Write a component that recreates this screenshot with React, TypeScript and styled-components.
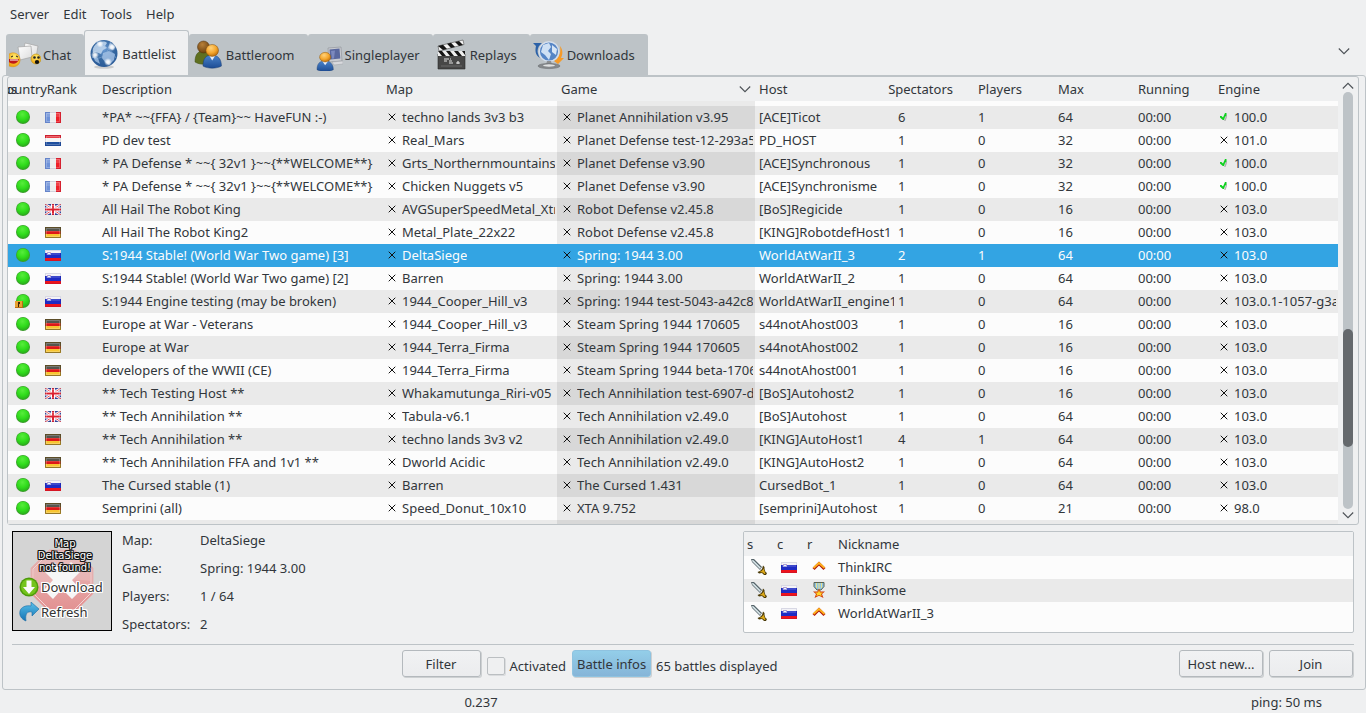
import React from "react";
import styled, { createGlobalStyle, css } from "styled-components";

const c = {
  window: "#eff0f1",
  line: "#bdc3c7",
  text: "#31363b",
  base: "#fcfcfc",
  alt: "#eaeaea",
  sorted: "#eaeaea",
  sortedAlt: "#d8d8d8",
  select: "#33a4e3",
};

const Global = createGlobalStyle`
  * { box-sizing: border-box; }
  body {
    margin: 0;
    background: ${c.window};
    color: ${c.text};
    font: 13px/20px "Noto Sans", sans-serif;
  }
  svg { display: block; flex: none; }
`;

/* ---------- layout ---------- */

const Window = styled.div`
  display: flex;
  flex-direction: column;
  height: 100vh;
  min-height: 480px;
  overflow: hidden;
`;

const MenuBar = styled.nav`
  display: flex;
  align-items: flex-start;
  height: 30px;
  flex: none;
  padding: 4px 10px;
  gap: 14px;
`;

const MenuItem = styled.button`
  border: 0;
  padding: 0;
  background: none;
  color: inherit;
  font: inherit;
`;

const TabBar = styled.div`
  display: flex;
  align-items: flex-end;
  flex: none;
  height: 46px;
  padding-left: 6px;
  margin-bottom: -1px;
`;

const Tab = styled.button<{ $active?: boolean }>`
  display: flex;
  align-items: center;
  gap: 2px;
  height: 42px;
  border: 0;
  border-radius: 3px 3px 0 0;
  padding: 0 13px 0 3px;
  background: ${c.line};
  color: inherit;
  font: inherit;
  ${(p) =>
    p.$active &&
    css`
      height: 46px;
      border: 1px solid ${c.line};
      border-width: 1px 1px 0;
      padding: 0 12px 0 3px;
      background: ${c.window};
    `}
`;

const TabMenu = styled.button`
  margin: 0 16px 21px auto;
  border: 0;
  padding: 0;
  background: none;
`;

const Panel = styled.main`
  display: flex;
  flex-direction: column;
  flex: 1;
  min-height: 0;
  margin-left: 2px;
  border: 1px solid ${c.line};
  border-radius: 3px;
`;

const ListFrame = styled.section`
  display: flex;
  flex: 1;
  min-height: 0;
  margin: 0 6px 0 4px;
  border: 1px solid ${c.line};
  border-radius: 3px;
`;

/* ---------- battle table ---------- */

const BattleTable = styled.table`
  display: flex;
  flex-direction: column;
  flex: 1;
  min-width: 0;
  overflow: hidden;
`;

const Row = styled.tr<{ $selected?: boolean }>`
  display: grid;
  grid-template-columns: 30px 30px 30px minmax(0, 1fr) 175px 198px 139px 80px 80px 80px 80px 124px;
  flex: none;
`;

const Head = styled.thead`
  display: block;
`;

const HeadCell = styled.th<{ $end?: boolean }>`
  display: flex;
  align-items: center;
  justify-content: ${(p) => (p.$end ? "flex-end" : "space-between")};
  height: 24px;
  padding: 0 ${(p) => (p.$end ? 21 : 4)}px 0 4px;
  font-weight: 400;
  white-space: nowrap;
`;

const Body = styled.tbody`
  display: flex;
  flex-direction: column;
  flex: 1;
  min-height: 0;
  overflow: hidden;
`;

const BattleRow = styled(Row)`
  background: ${c.base};
  &:nth-child(even) {
    background: ${c.alt};
  }
  &:first-child {
    margin-top: -18px;
  }
  ${(p) =>
    p.$selected &&
    css`
      &&:nth-child(n) {
        background: ${c.select};
        color: ${c.base};
      }
    `}
`;

const Cell = styled.td<{ $pad?: number }>`
  display: flex;
  align-items: center;
  height: 23px;
  padding: 0 1px 1px ${(p) => p.$pad ?? 4}px;
  white-space: nowrap;
  overflow: hidden;
`;

const SortedCell = styled(Cell)`
  ${BattleRow}:nth-child(odd) > & {
    background: ${c.sorted};
  }
  ${BattleRow}:nth-child(even) > & {
    background: ${c.sortedAlt};
  }
  ${BattleRow}[aria-selected="true"] > && {
    background: ${c.select};
  }
`;

const Marked = styled.span`
  display: flex;
  align-items: center;
  gap: 6px;
  width: 100%;
  padding-right: 1px;
  overflow: hidden;
`;

const Clip = styled.span`
  overflow: hidden;
`;

const Scroll = styled.div`
  display: flex;
  flex-direction: column;
  align-items: center;
  flex: none;
  width: 20px;
  padding: 5px 0 5px;
  gap: 2px;
`;

const Track = styled.div`
  display: flex;
  flex-direction: column;
  flex: 1;
  width: 10px;
  border-radius: 5px;
  background: ${c.line};
`;

const TrackGap = styled.div<{ $grow: number }>`
  flex: ${(p) => p.$grow};
`;

const Thumb = styled.div`
  flex: 118;
  border-radius: 5px;
  background: #65696d;
`;

/* ---------- details ---------- */

const Details = styled.section`
  display: flex;
  flex: none;
  margin: 6px 11px 0 9px;
`;

const MapPreview = styled.div`
  display: grid;
  width: 100px;
  height: 100px;
  border: 1px solid #000;
  background: #d4d4d4;
  > * {
    grid-area: 1 / 1;
  }
`;

const PreviewText = styled.div`
  display: flex;
  flex-direction: column;
  padding: 6px 0 0 6px;
`;

const Missing = styled.p`
  margin: 0;
  color: #fff;
  font: 10px/12px "DejaVu Sans", sans-serif;
  text-align: center;
  text-shadow: 1px 0 #111, -1px 0 #111, 0 1px #111, 0 -1px #111, 1px 1px #111, -1px -1px #111,
    1px -1px #111, -1px 1px #111;
`;

const PreviewAction = styled.button`
  display: flex;
  align-items: center;
  gap: 2px;
  height: 25px;
  border: 0;
  padding: 0;
  background: none;
  color: #333;
  font: 13px/20px "Noto Sans", sans-serif;
  text-shadow: 1px 0 #fff, -1px 0 #fff, 0 1px #fff, 0 -1px #fff, 1px 1px #fff, -1px -1px #fff,
    1px -1px #fff, -1px 1px #fff;
`;

const Facts = styled.dl`
  display: grid;
  grid-template-columns: 78px auto;
  grid-auto-rows: 18px;
  gap: 10px 0;
  margin: 0 auto 0 10px;
  line-height: 18px;
  dd {
    margin: 0;
  }
`;

const Users = styled.div`
  flex: 0 0 611px;
  height: 102px;
  border: 1px solid ${c.line};
  border-radius: 2px;
  background: ${c.base};
  overflow: hidden;
`;

const UserTable = styled.table`
  display: block;
  thead,
  tbody {
    display: block;
  }
  thead {
    background: ${c.window};
  }
`;

const UserRow = styled.tr`
  display: grid;
  grid-template-columns: 30px 30px 30px 1fr;
  tbody &:nth-child(even) {
    background: ${c.alt};
  }
`;

const UserHead = styled(HeadCell)`
  padding-left: 3px;
  &:last-child {
    padding-left: 4px;
  }
`;

/* ---------- bottom ---------- */

const Rule = styled.hr`
  flex: none;
  width: auto;
  height: 1px;
  margin: 11px 11px 5px 9px;
  border: 0;
  background: ${c.line};
`;

const Actions = styled.div`
  display: flex;
  flex: none;
  align-items: flex-start;
  gap: 6px;
  margin: 0 12px 8px 9px;
`;

const Spacer = styled.span<{ $grow: number }>`
  flex: ${(p) => p.$grow};
`;

const Button = styled.button<{ $on?: boolean; $w: number }>`
  width: ${(p) => p.$w}px;
  height: 27px;
  border: 1px solid ${(p) => (p.$on ? "#8fc3e0" : "#b4b9bd")};
  border-radius: 3px;
  padding: 0;
  background: ${(p) => (p.$on ? "linear-gradient(#93cee9, #86b5d8)" : "linear-gradient(#f1f2f3, #ebecee)")};
  box-shadow: 1px 1px 0 #cdd0d2;
  color: inherit;
  font: inherit;
`;

const CheckLabel = styled.label`
  display: flex;
  align-items: center;
  gap: 5px;
  height: 31px;
`;

const CheckBox = styled.input`
  appearance: none;
  width: 18px;
  height: 18px;
  margin: 0;
  border: 1px solid #bbbfc2;
  border-radius: 2px;
  box-shadow: 1px 1px 0 #dadcde;
`;

const Count = styled.output`
  margin-left: -1px;
  padding-top: 6px;
`;

const StatusBar = styled.footer`
  display: flex;
  flex: none;
  height: 23px;
  padding-top: 2px;
`;

const StatusField = styled.span<{ $basis: string }>`
  flex: ${(p) => p.$basis};
`;

/* ---------- icons ---------- */

const Chevron = ({ up }: { up?: boolean }) => (
  <svg width="12" height="8" viewBox="0 0 12 8" fill="none" stroke="#4d5257" strokeWidth="1.1">
    <path d={up ? "M.8 6.5 6 1.3l5.200 5.200" : "M.8 1.500 6 6.700l5.200-5.200"} />
  </svg>
);

const Cross = () => (
  <svg width="8" height="8" viewBox="0 0 8 8" shapeRendering="crispEdges">
    <path
      fill="#111"
      d="M1 1h1v1H1zM2 2h1v1H2zM3 3h2v2H3zM5 2h1v1H5zM6 1h1v1H6zM2 5h1v1H2zM1 6h1v1H1zM5 5h1v1H5zM6 6h1v1H6z"
    />
    <path fill="#000" opacity=".25" d="M0 0h1v1H0zM7 0h1v1H7zM0 7h1v1H0zM7 7h1v1H7z" />
  </svg>
);

const Tick = () => (
  <svg width="8" height="8" viewBox="0 0 8 8">
    <path fill="#8a8a8a" opacity=".6" d="M7 1v3L5.500 8H4.200L5.500 4z" />
    <path fill="#10d020" d="M5 0h1.500v2.500L5 4 4 7H2.800L0 4.500V3h1.500L3 4.500z" />
  </svg>
);

const Orb = ({ locked }: { locked?: boolean }) => (
  <svg width="16" height="16" viewBox="0 0 16 16">
    <circle cx="8" cy="8" r="7" fill="#3f9a30" />
    <circle cx="8" cy="7.800" r="6.400" fill="url(#orb)" />
    {locked && (
      <g>
        <path d="M0 8h8v7H0z" fill="#e8a030" />
        <path d="M0 14h8v1H0zM7 8h1v7H7z" fill="#b86a14" />
        <path d="M3 9h2v2H4v3H3z" fill="#3a2208" />
      </g>
    )}
  </svg>
);

type Country = "fr" | "nl" | "gb" | "de" | "si";

const bands: Record<string, { colours: [string, string, string]; cuts: [number, number] }> = {
  nl: { colours: ["#e3202a", "#f4f4f4", "#1f4f9e"], cuts: [3, 7] },
  de: { colours: ["#3a3a32", "#dd1818", "#f7c531"], cuts: [4, 7] },
  si: { colours: ["#f2f2f6", "#1e2bc4", "#ee141c"], cuts: [3, 8] },
};

const Flag = ({ of }: { of: Country }) => {
  const b = bands[of];
  return (
    <svg width="16" height="11" viewBox="0 0 16 11">
      {of === "fr" && (
        <>
          <path d="M0 0h5v11H0z" fill="#6f92d8" />
          <path d="M5 0h6v11H5z" fill="#ececec" />
          <path d="M11 0h5v11h-5z" fill="#ee2028" />
        </>
      )}
      {of === "gb" && (
        <>
          <path d="M0 0h16v11H0z" fill="#35479e" />
          <path d="m0 0 16 11M16 0 0 11" stroke="#fff" strokeWidth="2.600" />
          <path d="m0 0 16 11M16 0 0 11" stroke="#e0404a" strokeWidth="1" />
          <path d="M8 0v11M0 5.500h16" stroke="#fff" strokeWidth="4" />
          <path d="M8 0v11M0 5.500h16" stroke="#dc2030" strokeWidth="2" />
        </>
      )}
      {b && (
        <>
          <path d="M0 0h16v11H0z" fill={b.colours[1]} />
          <path d={`M0 0h16v${b.cuts[0]}H0z`} fill={b.colours[0]} />
          <path d={`M0 ${b.cuts[1]}h16v${11 - b.cuts[1]}H0z`} fill={b.colours[2]} />
        </>
      )}
      {of === "si" && (
        <>
          <path d="M2 2h4v3H2z" fill="#8d92dc" />
          <path d="M3 3h2v1H3z" fill="#f4f4fa" />
          <path d="M2 2h1v1H2zM5 2h1v1H5z" fill="#c890b4" />
        </>
      )}
      <path d="M1 1h14v4H1z" fill="#fff" opacity=".14" />
      {of !== "si" && <path d="M1.500 1.500h13v8h-13z" fill="none" stroke="#fff" opacity=".22" />}
      <path
        d="M.5.5h15v10H.5z"
        fill="none"
        stroke={of === "de" ? "#6b5524" : "#202060"}
        opacity={of === "de" ? 0.7 : 0.12}
      />
    </svg>
  );
};

const Defs = () => (
  <svg width="0" height="0" style={{ position: "absolute" }} aria-hidden="true">
    <defs>
      <radialGradient id="orb" cx=".45" cy=".3" r=".75">
        <stop offset="0" stopColor="#58ec3c" />
        <stop offset=".55" stopColor="#30dc1c" />
        <stop offset="1" stopColor="#28a81a" />
      </radialGradient>
      <radialGradient id="skin" cx=".4" cy=".3" r=".7">
        <stop offset="0" stopColor="#ffd27a" />
        <stop offset=".6" stopColor="#f5a62c" />
        <stop offset="1" stopColor="#c0700c" />
      </radialGradient>
      <radialGradient id="brown" cx=".4" cy=".3" r=".7">
        <stop offset="0" stopColor="#b88038" />
        <stop offset="1" stopColor="#6e4310" />
      </radialGradient>
      <linearGradient id="suit" x2="0" y2="1">
        <stop offset="0" stopColor="#4a84cc" />
        <stop offset="1" stopColor="#1d4c94" />
      </linearGradient>
      <radialGradient id="globe" cx=".5" cy=".35" r=".65">
        <stop offset="0" stopColor="#6c9cd4" />
        <stop offset=".6" stopColor="#34669f" />
        <stop offset="1" stopColor="#2a5a98" />
      </radialGradient>
      <radialGradient id="glow">
        <stop offset="0" stopColor="#fff" />
        <stop offset=".4" stopColor="#fff" stopOpacity=".8" />
        <stop offset="1" stopColor="#fff" stopOpacity="0" />
      </radialGradient>
      <radialGradient id="smile" cx=".5" cy=".3" r=".7">
        <stop offset="0" stopColor="#ffec70" />
        <stop offset="1" stopColor="#f0a410" />
      </radialGradient>
      <linearGradient id="paper" x2="1" y2="1">
        <stop offset="0" stopColor="#fff" />
        <stop offset="1" stopColor="#dcdcdc" />
      </linearGradient>
      <linearGradient id="arrow" x2="0" y2="1">
        <stop offset="0" stopColor="#58c0ea" />
        <stop offset="1" stopColor="#1674b4" />
      </linearGradient>
      <linearGradient id="stop" x2="0" y2="1">
        <stop offset="0" stopColor="#e0b4b4" />
        <stop offset=".5" stopColor="#e6a6a6" />
        <stop offset="1" stopColor="#e29090" />
      </linearGradient>
    </defs>
  </svg>
);

const ChatIcon = () => (
  <svg width="32" height="32" viewBox="0 0 32 32">
    <path d="m16 4 13 3-2 12-13-3z" fill="url(#paper)" stroke="#a4a4a4" strokeWidth=".7" />
    <path d="m9 8 13-1 1 11-12 3z" fill="url(#paper)" stroke="#a4a4a4" strokeWidth=".7" />
    <path d="M0 15c5-3 11 0 11 6 0 6-6 8-11 6z" fill="url(#smile)" stroke="#d88a10" strokeWidth=".5" />
    <path d="M0 20h10c-1 5-7 6-10 3z" fill="#c01818" />
    <path d="M1 21h8" stroke="#fff" strokeWidth="1" />
    <path d="m2 18 2-1M7 17l2 1" stroke="#222" strokeWidth="1" />
    <circle cx="27" cy="20" r="5" fill="url(#smile)" stroke="#b89010" strokeWidth=".6" />
    <ellipse cx="28" cy="23" rx="2.200" ry="2" fill="#111" />
    <circle cx="25.500" cy="18.500" r="1.300" fill="#222" />
    <circle cx="29.500" cy="18.500" r="1.300" fill="#222" />
  </svg>
);

const BattlelistIcon = () => (
  <svg width="32" height="32" viewBox="0 0 32 32">
    <ellipse cx="16" cy="29" rx="10" ry="1.800" fill="#000" opacity=".15" />
    <circle cx="16" cy="15.500" r="13.500" fill="url(#globe)" />
    <path d="M8 6c4-3 9-3 11-1l-2 3 2 2-4 2-2 4-5-2-3 1c-1-3 0-6 3-9z" fill="#c3d8ef" opacity=".85" />
    <path d="m15 15 6-2 6 3-1 6-5 5-4-3-3-4z" fill="#a9c6e8" opacity=".8" />
    <path d="m22 4 5 5-2 3-5-2zM5 18l5 2 2 6-5-3z" fill="#a9c7e8" opacity=".75" />
    <path d="M4 19c6 3 14 1 18-12M8 4c8 2 16 9 20 16" stroke="#8fb3dc" strokeWidth=".8" fill="none" opacity=".7" />
    <g fill="url(#glow)">
      <circle cx="12" cy="6" r="3.500" />
      <circle cx="24" cy="9" r="4" />
      <circle cx="7" cy="17" r="4" />
      <circle cx="20" cy="24" r="4" />
    </g>
  </svg>
);

const Person = ({ head, suit }: { head: string; suit: string }) => (
  <>
    <path d="M0 24c0-8 3-12 9-12s10 4 10 12c-5 3-14 3-19 0z" fill={suit} stroke="#173a70" strokeWidth=".5" />
    <path d="m6 12 3.500 6L13 12z" fill="#e8eef8" />
    <circle cx="9.500" cy="7" r="6.500" fill={head} stroke="#7a4808" strokeWidth=".5" />
  </>
);

const BattleroomIcon = () => (
  <svg width="32" height="32" viewBox="0 0 32 32">
    <path d="M3 23c0-8 3-11 9-11s8 4 8 11c-5 3-12 3-17 0z" fill="#5f7020" stroke="#3c4a10" strokeWidth=".5" />
    <circle cx="11.500" cy="8" r="6" fill="url(#brown)" stroke="#4c2c06" strokeWidth=".5" />
    <g transform="translate(11 5) scale(.97 .92)">
      <Person head="url(#skin)" suit="url(#suit)" />
    </g>
  </svg>
);

const SingleplayerIcon = () => (
  <svg width="32" height="32" viewBox="0 0 32 32">
    <path d="m17 9 13-1 1 14-13 1z" fill="#c9cbd0" stroke="#8b8e95" strokeWidth=".6" />
    <path d="m18.500 10.500 10-1 .8 10-10 1z" fill="#5a689e" />
    <path d="m20 12 4-.5-1 8-2 .2z" fill="#8a97cc" opacity=".7" />
    <path d="m21 23 11-1v3l-9 1z" fill="#d9dade" stroke="#a0a3a9" strokeWidth=".5" />
    <g transform="translate(6 13) scale(.86 .74)">
      <Person head="url(#skin)" suit="url(#suit)" />
    </g>
  </svg>
);

const ReplaysIcon = () => (
  <svg width="32" height="32" viewBox="0 0 32 32">
    <path d="M2 15h27v15H2z" fill="#474747" stroke="#2a2a2a" strokeWidth=".6" />
    <path d="M2 12h27v5H2z" fill="#eee" />
    <path d="m2 12 4 5h4l-4-5zM10 12l4 5h4l-4-5zM18 12l4 5h4l-4-5zM26 12l3 4v-4z" fill="#151515" />
    <path d="m2 7 25-6 1 4.500L3 12z" fill="#f2f2f2" stroke="#333" strokeWidth=".5" />
    <path d="m2 7 5 4 4-1-4-4.200zM11 4.800l4 4.200 4-1-4-4.200zM19 2.900l4 4.100 4-1-4-4.100z" fill="#151515" />
    <path d="M8 20h5M14 20h1M8 22h3M13 22h3M13 24h4M20 24h4M22 22v3" stroke="#e4e4e4" strokeWidth="1.200" />
    <path d="M5 27h21" stroke="#6a6a6a" />
  </svg>
);

const DownloadsIcon = () => (
  <svg width="32" height="32" viewBox="0 0 32 32">
    <path d="M0 4h9l-3 3c-2 4-2 7 1 12C2 16 2 11 3 7z" fill="#2c62a8" />
    <path d="M27 7c3 4 3 8 1 12h3l-6 6-4-3 3-2c3-4 4-8 3-13z" fill="#f59a28" />
    <circle cx="16" cy="12.500" r="9.800" fill="#5585c6" stroke="#d5deea" strokeWidth="1.500" />
    <path d="m10 6 6-2 2 4-3 4 3 3-2 6-4-5-4-3z" fill="#dceaf8" opacity=".9" />
    <path d="m19 6 5 4-1 6-4-3z" fill="#e6f0fa" opacity=".9" />
    <path d="M14 22h4l1 4h-6z" fill="#8c8f92" />
    <ellipse cx="16" cy="27" rx="11" ry="2.600" fill="#85888b" stroke="#6d7073" strokeWidth=".6" />
    <ellipse cx="16" cy="26.500" rx="6" ry="1.200" fill="#dfe1e2" />
  </svg>
);

const StopIcon = () => (
  <svg width="98" height="98" viewBox="0 0 98 98">
    <path d="M36 18h26l18 18v26L62 80H36L18 62V36z" fill="url(#stop)" stroke="#e4b4b4" />
    <path d="M37 20h24l17 17v24L61 78H37L20 61V37z" fill="none" stroke="#f2d4d4" />
    <path d="M37 21h24l16 16v12c-18-3-38-1-56 8V37z" fill="#fff" opacity=".14" />
    <path d="m41 30 8 9 9-9 10 9-9 9 9 10-9 9-10-10-9 10-9-9 9-10-9-9z" fill="#f6f6f6" />
  </svg>
);

const DownloadIcon = () => (
  <svg width="20" height="20" viewBox="0 0 20 20">
    <circle cx="10" cy="10" r="9.500" fill="#4c9a0a" />
    <circle cx="10" cy="10" r="8" fill="#74c41c" />
    <path d="M7.500 3.500h5V10H16l-6 7-6-7h3.500z" fill="#fafafa" />
  </svg>
);

const RefreshIcon = () => (
  <svg width="20" height="20" viewBox="0 0 20 20">
    <path
      d="M12 0 20 7l-7 7v-4c-5-1-7 2-6 9C2 17 0 13 1 9c1-4 6-6 11-5z"
      fill="url(#arrow)"
      stroke="#1a6ca4"
      strokeWidth=".6"
    />
  </svg>
);

const Sword = () => (
  <svg width="16" height="16" viewBox="0 0 16 16">
    <path d="M0 0h3l8 8-2 3-8-8z" fill="#56646a" />
    <path d="m1 1 1.500.2 7.500 7.500-1 1.200L1.500 2.500z" fill="#d9e6ea" />
    <path d="M12 6.500 13.500 8v2l1 3 1.500 1-1 2h-2l-2-2-3 .5L6.500 13 9 12l2-2z" fill="#4a3a08" />
    <path d="m12 8 .5 2-2 2-2 1 3 .5 2 1.500h1l-1-3z" fill="#dca818" />
  </svg>
);

const Rank = ({ medal }: { medal?: boolean }) =>
  medal ? (
    <svg width="12" height="16" viewBox="0 0 12 16">
      <path d="M1 .5h10v4L8 8H4L1 4.500z" fill="#8fc4e4" stroke="#5a6250" />
      <path d="M3.500 1v5M6 1v6M8.500 1v5" stroke="#e8e08a" />
      <path d="m6 6.500 1.500 3H12L9 12l1.500 4L6 13.800 1.500 16 3 12 0 9.500h4.500z" fill="#d23a08" />
      <path d="m6 8 1 2.500h3L8 12l.8 2.300L6 13l-2.800 1.300L4 12l-2-1.500h3z" fill="#ffd52a" />
    </svg>
  ) : (
    <svg width="14" height="12" viewBox="0 0 14 12">
      <path d="m1.500 8 5.500-5.500L12.500 8" fill="none" stroke="#b01808" strokeWidth="3" />
      <path d="m1.500 7 5.500-5L12.500 7" fill="none" stroke="#ffb41c" strokeWidth="1.700" />
    </svg>
  );

/* ---------- data ---------- */

type Battle = [
  country: Country,
  description: string,
  map: string,
  game: string,
  host: string,
  spectators: number,
  players: number,
  max: number,
  engine: string,
];

const battles: Battle[] = [
  ["fr", "*PA* ~~{FFA} / {Team}~~ HaveFUN :-)", "techno lands 3v3 b3", "Planet Annihilation v3.95", "[ACE]Ticot", 6, 1, 64, "100.0"],
  ["nl", "PD dev test", "Real_Mars", "Planet Defense test-12-293a5e", "PD_HOST", 1, 0, 32, "101.0"],
  ["fr", "* PA Defense * ~~{ 32v1 }~~{**WELCOME**}", "Grts_Northernmountains_", "Planet Defense v3.90", "[ACE]Synchronous", 1, 0, 32, "100.0"],
  ["fr", "* PA Defense * ~~{ 32v1 }~~{**WELCOME**}", "Chicken Nuggets v5", "Planet Defense v3.90", "[ACE]Synchronisme", 1, 0, 32, "100.0"],
  ["gb", "All Hail The Robot King", "AVGSuperSpeedMetal_Xtr", "Robot Defense v2.45.8", "[BoS]Regicide", 1, 0, 16, "103.0"],
  ["de", "All Hail The Robot King2", "Metal_Plate_22x22", "Robot Defense v2.45.8", "[KING]RobotdefHost1", 1, 0, 16, "103.0"],
  ["si", "S:1944 Stable! (World War Two game) [3]", "DeltaSiege", "Spring: 1944 3.00", "WorldAtWarII_3", 2, 1, 64, "103.0"],
  ["si", "S:1944 Stable! (World War Two game) [2]", "Barren", "Spring: 1944 3.00", "WorldAtWarII_2", 1, 0, 64, "103.0"],
  ["si", "S:1944 Engine testing (may be broken)", "1944_Cooper_Hill_v3", "Spring: 1944 test-5043-a42c81", "WorldAtWarII_engine1", 1, 0, 64, "103.0.1-1057-g3a2"],
  ["de", "Europe at War - Veterans", "1944_Cooper_Hill_v3", "Steam Spring 1944 170605", "s44notAhost003", 1, 0, 16, "103.0"],
  ["de", "Europe at War", "1944_Terra_Firma", "Steam Spring 1944 170605", "s44notAhost002", 1, 0, 16, "103.0"],
  ["de", "developers of the WWII (CE)", "1944_Terra_Firma", "Steam Spring 1944 beta-17060", "s44notAhost001", 1, 0, 16, "103.0"],
  ["gb", "** Tech Testing Host **", "Whakamutunga_Riri-v05", "Tech Annihilation test-6907-df", "[BoS]Autohost2", 1, 0, 16, "103.0"],
  ["gb", "** Tech Annihilation **", "Tabula-v6.1", "Tech Annihilation v2.49.0", "[BoS]Autohost", 1, 0, 64, "103.0"],
  ["de", "** Tech Annihilation **", "techno lands 3v3 v2", "Tech Annihilation v2.49.0", "[KING]AutoHost1", 4, 1, 64, "103.0"],
  ["de", "** Tech Annihilation FFA and 1v1 **", "Dworld Acidic", "Tech Annihilation v2.49.0", "[KING]AutoHost2", 1, 0, 64, "103.0"],
  ["si", "The Cursed stable (1)", "Barren", "The Cursed 1.431", "CursedBot_1", 1, 0, 64, "103.0"],
  ["de", "Semprini (all)", "Speed_Donut_10x10", "XTA 9.752", "[semprini]Autohost", 1, 0, 21, "98.0"],
];

const selectedHost = "WorldAtWarII_3";

const tabs: [string, React.FC][] = [
  ["Chat", ChatIcon],
  ["Battlelist", BattlelistIcon],
  ["Battleroom", BattleroomIcon],
  ["Singleplayer", SingleplayerIcon],
  ["Replays", ReplaysIcon],
  ["Downloads", DownloadsIcon],
];

const headings = ["Status", "Country", "Rank", "Description", "Map", "Game", "Host", "Spectators", "Players", "Max", "Running", "Engine"];
const narrowHeadings = ["Status", "Country", "Rank", "Spectators"];

const EdgeRow = () => (
  <BattleRow>
    <Cell $pad={7}>
      <Orb />
    </Cell>
    <Cell />
    <Cell />
    <Cell />
    <Cell />
    <SortedCell />
    <Cell />
    <Cell />
    <Cell />
    <Cell />
    <Cell />
    <Cell />
  </BattleRow>
);

const MarkedText = ({ ok, children }: { ok?: boolean; children: React.ReactNode }) => (
  <Marked>
    {ok ? <Tick /> : <Cross />}
    <Clip>{children}</Clip>
  </Marked>
);

export default function App() {
  return (
    <Window>
      <Global />
      <Defs />
      <MenuBar>
        {["Server", "Edit", "Tools", "Help"].map((m) => (
          <MenuItem key={m}>{m}</MenuItem>
        ))}
      </MenuBar>

      <TabBar role="tablist">
        {tabs.map(([name, Icon]) => (
          <Tab key={name} role="tab" aria-selected={name === "Battlelist"} $active={name === "Battlelist"}>
            <Icon />
            {name}
          </Tab>
        ))}
        <TabMenu aria-label="More tabs">
          <Chevron />
        </TabMenu>
      </TabBar>

      <Panel>
        <ListFrame>
          <BattleTable>
            <Head>
              <Row>
                {headings.map((h) => (
                  <HeadCell key={h} $end={narrowHeadings.includes(h)}>
                    {h}
                    {h === "Game" && <Chevron />}
                  </HeadCell>
                ))}
              </Row>
            </Head>
            <Body>
              <EdgeRow />
              {battles.map(([country, description, map, game, host, spectators, players, max, engine]) => (
                <BattleRow key={host} $selected={host === selectedHost} aria-selected={host === selectedHost}>
                  <Cell $pad={7}>
                    <Orb locked={host === "WorldAtWarII_engine1"} />
                  </Cell>
                  <Cell $pad={7}>
                    <Flag of={country} />
                  </Cell>
                  <Cell />
                  <Cell>{description}</Cell>
                  <Cell $pad={6}>
                    <MarkedText>{map}</MarkedText>
                  </Cell>
                  <SortedCell $pad={6}>
                    <MarkedText>{game}</MarkedText>
                  </SortedCell>
                  <Cell>{host}</Cell>
                  <Cell>{spectators}</Cell>
                  <Cell>{players}</Cell>
                  <Cell>{max}</Cell>
                  <Cell>00:00</Cell>
                  <Cell $pad={6}>
                    <MarkedText ok={engine === "100.0"}>{engine}</MarkedText>
                  </Cell>
                </BattleRow>
              ))}
              <EdgeRow />
            </Body>
          </BattleTable>
          <Scroll>
            <Chevron up />
            <Track>
              <TrackGap $grow={237} />
              <Thumb />
              <TrackGap $grow={62} />
            </Track>
            <Chevron />
          </Scroll>
        </ListFrame>

        <Details>
          <MapPreview>
            <StopIcon />
            <PreviewText>
              <Missing>
                Map
                <br />
                DeltaSiege
                <br />
                not found!
              </Missing>
              <PreviewAction>
                <DownloadIcon />
                Download
              </PreviewAction>
              <PreviewAction>
                <RefreshIcon />
                Refresh
              </PreviewAction>
            </PreviewText>
          </MapPreview>
          <Facts>
            <dt>Map:</dt>
            <dd>DeltaSiege</dd>
            <dt>Game:</dt>
            <dd>Spring: 1944 3.00</dd>
            <dt>Players:</dt>
            <dd>1 / 64</dd>
            <dt>Spectators:</dt>
            <dd>2</dd>
          </Facts>
          <Users>
            <UserTable>
              <thead>
                <UserRow>
                  {["s", "c", "r", "Nickname"].map((h) => (
                    <UserHead key={h}>{h}</UserHead>
                  ))}
                </UserRow>
              </thead>
              <tbody>
                {["ThinkIRC", "ThinkSome", "WorldAtWarII_3"].map((name) => (
                  <UserRow key={name}>
                    <Cell $pad={7}>
                      <Sword />
                    </Cell>
                    <Cell $pad={7}>
                      <Flag of="si" />
                    </Cell>
                    <Cell $pad={name === "ThinkSome" ? 9 : 8}>
                      <Rank medal={name === "ThinkSome"} />
                    </Cell>
                    <Cell>{name}</Cell>
                  </UserRow>
                ))}
              </tbody>
            </UserTable>
          </Users>
        </Details>

        <Rule />

        <Actions>
          <Spacer $grow={64} />
          <Button $w={79}>Filter</Button>
          <CheckLabel>
            <CheckBox type="checkbox" />
            Activated
          </CheckLabel>
          <Button $w={79} $on aria-pressed="true">
            Battle infos
          </Button>
          <Count>65 battles displayed</Count>
          <Spacer $grow={65} />
          <Button $w={84}>Host new...</Button>
          <Button $w={84}>Join</Button>
        </Actions>
      </Panel>

      <StatusBar>
        <StatusField $basis="0 0 34%" />
        <StatusField $basis="1">0.237</StatusField>
        <StatusField $basis="0 0 115px">ping: 50 ms</StatusField>
      </StatusBar>
    </Window>
  );
}
